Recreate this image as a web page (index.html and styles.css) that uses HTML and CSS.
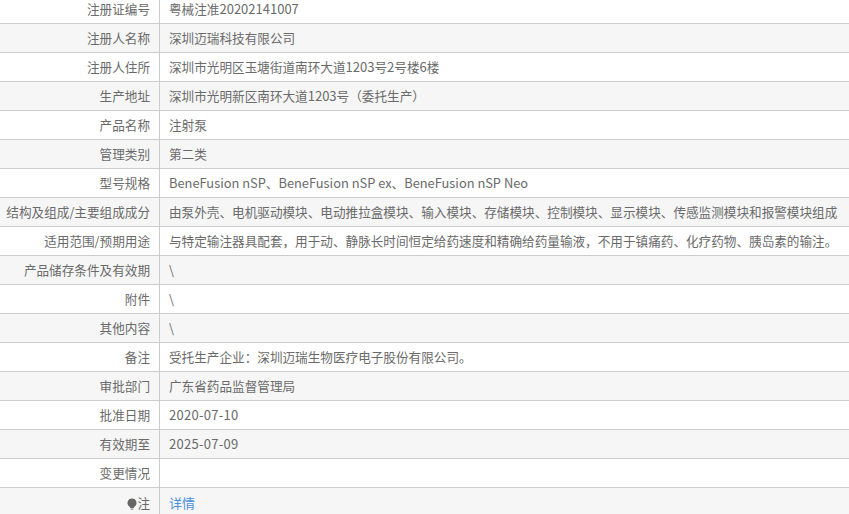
FILE: index.html
```html
<!DOCTYPE html>
<html lang="zh-CN">
<head>
<meta charset="utf-8">
<title>注册信息</title>
<link rel="stylesheet" href="styles.css">
</head>
<body>
<table class="info">
<tr><th>注册证编号</th><td>粤械注准<span class="num">20202141007</span></td></tr>
<tr><th>注册人名称</th><td>深圳迈瑞科技有限公司</td></tr>
<tr><th>注册人住所</th><td>深圳市光明区玉塘街道南环大道<span class="num">1203</span>号<span class="num">2</span>号楼<span class="num">6</span>楼</td></tr>
<tr><th>生产地址</th><td>深圳市光明新区南环大道<span class="num">1203</span>号（委托生产）</td></tr>
<tr><th>产品名称</th><td>注射泵</td></tr>
<tr><th>管理类别</th><td>第二类</td></tr>
<tr><th>型号规格</th><td><span class="lat">BeneFusion nSP</span>、<span class="lat">BeneFusion nSP ex</span>、<span class="lat">BeneFusion nSP Neo</span></td></tr>
<tr><th>结构及组成/主要组成成分</th><td>由泵外壳、电机驱动模块、电动推拉盒模块、输入模块、存储模块、控制模块、显示模块、传感监测模块和报警模块组成</td></tr>
<tr><th>适用范围/预期用途</th><td>与特定输注器具配套，用于动、静脉长时间恒定给药速度和精确给药量输液，不用于镇痛药、化疗药物、胰岛素的输注。</td></tr>
<tr><th>产品储存条件及有效期</th><td>\</td></tr>
<tr><th>附件</th><td>\</td></tr>
<tr><th>其他内容</th><td>\</td></tr>
<tr><th>备注</th><td>受托生产企业：深圳迈瑞生物医疗电子股份有限公司。</td></tr>
<tr><th>审批部门</th><td>广东省药品监督管理局</td></tr>
<tr><th>批准日期</th><td><span class="date">2020-07-10</span></td></tr>
<tr><th>有效期至</th><td><span class="date">2025-07-09</span></td></tr>
<tr><th>变更情况</th><td></td></tr>
<tr class="last"><th><svg class="bulb" width="10" height="12" viewBox="0 0 10 12"><path fill="#666" d="M5 0.5a4.5 4.5 0 0 1 2.4 8.3L6.6 10H3.4l-.8-1.2A4.5 4.5 0 0 1 5 .5z"/><rect x="3.6" y="10.4" width="2.8" height="1.4" fill="#999"/></svg>注</th><td><a href="#" class="link">详情</a></td></tr>
</table>
</body>
</html>
```

FILE: styles.css
```css
html, body {
  margin: 0;
  padding: 0;
  background: #fff;
  overflow: hidden;
}
.info {
  width: 849px;
  margin-top: -6px;
  border-collapse: collapse;
  table-layout: fixed;
  font-family: "Noto Sans CJK SC", "Liberation Sans", sans-serif;
  font-size: 12.62px;
  color: #6a6a6a;
}
.info tr {
  height: 29px;
}
.info tr:nth-child(even) {
  background: #f6f6f6;
}
.info th, .info td {
  padding: 0;
  border-top: 1px solid #ccc;
  border-bottom: 1px solid #ccc;
  font-weight: 400;
  white-space: nowrap;
  line-height: 18px;
}
.info th {
  width: 150px;
  padding-right: 9px;
  text-align: right;
  border-right: 1px solid #ccc;
}
.info td {
  padding-left: 9px;
}
.num {
  font-size: 13px;
}
.lat {
  font-size: 12.85px;
}
.date {
  font-size: 13px;
  letter-spacing: 0.28px;
}
.info .last th, .info .last td {
  padding-top: 2px;
}
.bulb {
  vertical-align: -2px;
}
.link {
  color: #4a90e2;
  font-size: 13px;
  text-decoration: none;
}
```
